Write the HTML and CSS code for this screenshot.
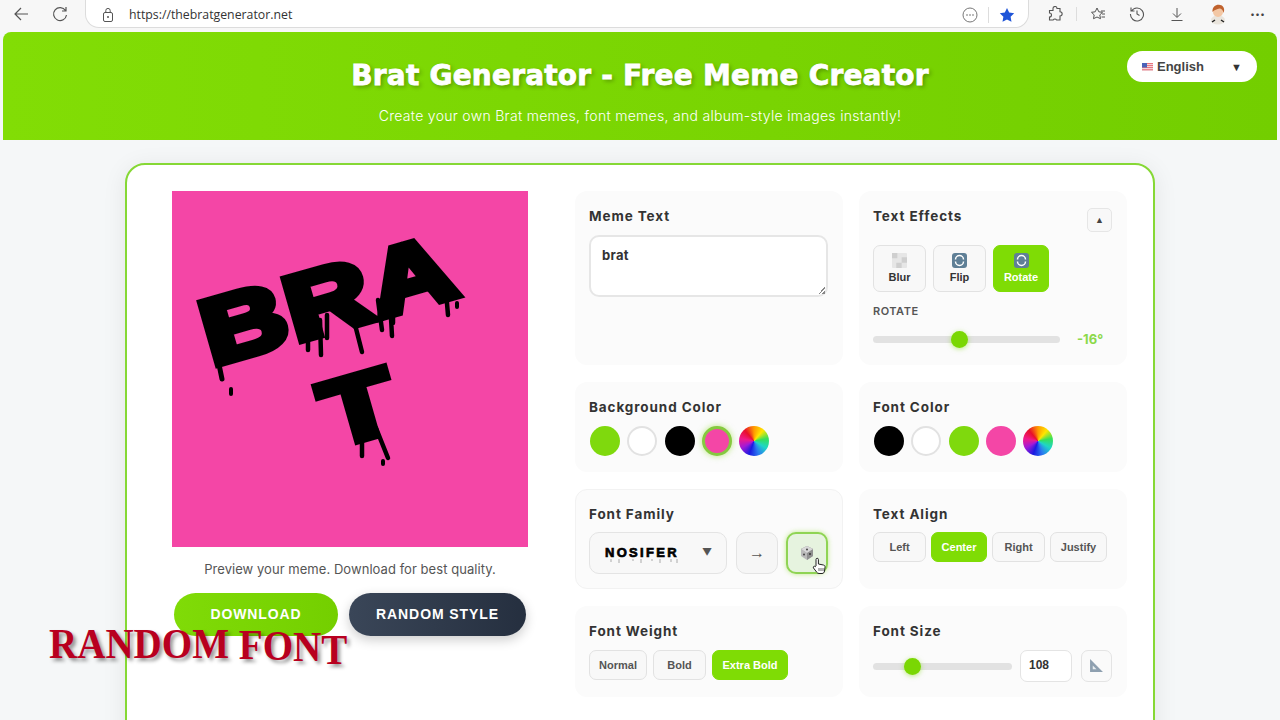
FILE: index.html
```html
<!DOCTYPE html>
<html>
<head>
  <title>Brat Generator</title>
  <link rel="stylesheet" href="styles.css">
</head>
<body>
  <div class="browser-bar">
    <svg class="tool back" width="18" height="18" viewBox="0 0 18 18"><path d="M16 9H3M9 3L3 9l6 6" fill="none" stroke="#555" stroke-width="1.2"/></svg>
    <svg class="tool reload" width="18" height="18" viewBox="0 0 18 18"><path d="M14.5 5.5A6.5 6.5 0 1 0 15.5 10M15 2v4h-4" fill="none" stroke="#555" stroke-width="1.2"/></svg>
    <div class="url-bar">
      <svg width="14" height="16" viewBox="0 0 14 16"><rect x="2.5" y="5.5" width="9" height="9" rx="1.5" fill="none" stroke="#555"/><path d="M4.8 5.5V3.6a2.2 2.2 0 0 1 4.4 0v1.9" fill="none" stroke="#555"/><circle cx="7" cy="10" r="1" fill="#555"/></svg>
      <span class="url-text">https://thebratgenerator.net</span>
      <svg class="url-more" width="16" height="16" viewBox="0 0 16 16"><circle cx="8" cy="8" r="7" fill="none" stroke="#777"/><circle cx="5" cy="8" r=".8" fill="#666"/><circle cx="8" cy="8" r=".8" fill="#666"/><circle cx="11" cy="8" r=".8" fill="#666"/></svg>
      <span class="url-sep"></span>
      <svg width="16" height="16" viewBox="0 0 16 16"><path d="M8 1l2.2 4.6 5 .7-3.6 3.5.9 5L8 12.4l-4.5 2.4.9-5L.8 6.3l5-.7z" fill="#1f55d8"/></svg>
    </div>
    <svg class="tool puzzle" width="16" height="16" viewBox="0 0 16 16"><path d="M6 2.5a2 2 0 0 1 4 0h3v3.2a2 2 0 0 1 0 4.3V14H9.6a2 2 0 0 0-3.4 0H2.5v-3a2 2 0 0 0 0-4V4.5H6z" fill="none" stroke="#555" stroke-width="1.1"/></svg>
    <span class="bar-sep"></span>
    <svg class="tool favs" width="16" height="16" viewBox="0 0 16 16"><path d="M7 2l1.8 3.8 3.7.5-2.7 2.6.7 3.800L7 11l-3.500 1.700.7-3.800L1.500 6.300l3.700-.5zM11 5h4M12 8h3M11.500 11H15" fill="none" stroke="#555"/></svg>
    <svg class="tool history" width="16" height="16" viewBox="0 0 16 16"><path d="M2.500 5A6.500 6.500 0 1 1 1.500 8M2 1.500V5h3.500M8 4.500V8l2.500 1.500" fill="none" stroke="#555" stroke-width="1.100"/></svg>
    <svg class="tool download" width="16" height="16" viewBox="0 0 16 16"><path d="M8 2v9M4 7.500l4 4 4-4M2.500 14.500h11" fill="none" stroke="#555"/></svg>
    <svg class="tool avatar" width="20" height="22" viewBox="0 0 20 22"><ellipse cx="10" cy="17" rx="7" ry="4.500" fill="#e9e4dc"/><circle cx="10" cy="9" r="5" fill="#f3c7a4"/><path d="M4.500 9C4 3 9 1 12 2c4 .5 5 5 3.500 8-.5-3-2-4.500-4-4.500-2.500 1-5 1-7 3.500z" fill="#c0622d"/><path d="M4 19l3-2M16 19l-3-2" stroke="#222" stroke-width="1.500"/></svg>
    <span class="tool more">···</span>
  </div>

  <header class="site-header">
    <h1>Brat Generator - Free Meme Creator</h1>
    <p>Create your own Brat memes, font memes, and album-style images instantly!</p>
    <div class="lang-select">
      <svg width="11" height="8" viewBox="0 0 11 8"><rect width="11" height="8" fill="#e9747f"/><path d="M0 1.500h11M0 3.500h11M0 5.500h11M0 7.300h11" stroke="#f3eef0" stroke-width=".8"/><rect width="5" height="4.500" fill="#4a62b8"/></svg>
      <span>English</span>
      <span class="lang-arrow">▼</span>
    </div>
  </header>

  <main class="generator-card">
    <section class="preview-col">
      <div class="meme-canvas">
        <div class="meme-text">BRA<br>T</div>
        <svg class="drips" width="356" height="356" viewBox="172 191 356 356">
          <g fill="none" stroke="#000" stroke-linecap="round">
            <path d="M216 350l6 29" stroke-width="5"/>
            <path d="M308 320v30M320 320l1 35M327 315v23M350 305l12 47M378 300l4 30M390 300l2 36M393 295v28M445 280l3 35" stroke-width="4.500"/>
            <path d="M362 430v26M376 428l12 30" stroke-width="4.500"/>
            <path d="M231 389v5M457 303v4M383 461v3" stroke-width="4"/>
          </g>
        </svg>
      </div>
      <p class="preview-note">Preview your meme. Download for best quality.</p>
      <div class="action-row">
        <button class="action-btn download-btn">DOWNLOAD</button>
        <button class="action-btn random-btn">RANDOM STYLE</button>
      </div>
    </section>

    <section class="controls">
      <div class="panel">
        <h3>Meme Text</h3>
        <div class="text-box">brat<span class="grip"></span></div>
      </div>

      <div class="panel">
        <h3>Text Effects</h3>
        <button class="collapse-btn">▲</button>
        <div class="effects">
          <button class="effect-btn blur-btn">
            <svg width="15" height="15" viewBox="0 0 14 14"><rect width="14" height="14" rx="1" fill="#e6e6e6"/><path d="M0 0h5v5H0zM9 4h5v5H9zM4 9h5v5H4z" fill="#cfcfcf"/></svg>
            Blur
          </button>
          <button class="effect-btn flip-btn">
            <svg width="15" height="15" viewBox="0 0 15 15"><rect width="15" height="15" rx="3" fill="#5f7f96"/><path d="M3.500 6.500a4 4 0 0 1 8 0M11.500 8.500a4 4 0 0 1-8 0" fill="none" stroke="#fff" stroke-width="1.500"/></svg>
            Flip
          </button>
          <button class="effect-btn rotate-btn active">
            <svg width="15" height="15" viewBox="0 0 15 15"><rect width="15" height="15" rx="3" fill="#5f7f96"/><path d="M3.500 6.500a4 4 0 0 1 8 0M11.500 8.500a4 4 0 0 1-8 0" fill="none" stroke="#fff" stroke-width="1.500"/></svg>
            Rotate
          </button>
        </div>
        <div class="sub-label">ROTATE</div>
        <div class="slider-row">
          <div class="slider rotate-slider"><span class="thumb" style="left: 41.5%"></span></div>
          <span class="slider-value">-16°</span>
        </div>
      </div>

      <div class="panel">
        <h3>Background Color</h3>
        <div class="swatches">
          <span class="swatch green"></span>
          <span class="swatch white"></span>
          <span class="swatch black"></span>
          <span class="swatch pink selected"></span>
          <span class="swatch rainbow"></span>
        </div>
      </div>

      <div class="panel">
        <h3>Font Color</h3>
        <div class="swatches">
          <span class="swatch black"></span>
          <span class="swatch white"></span>
          <span class="swatch green"></span>
          <span class="swatch pink"></span>
          <span class="swatch rainbow"></span>
        </div>
      </div>

      <div class="panel panel-outlined">
        <h3>Font Family</h3>
        <div class="family-row">
          <div class="family-select">
            <span class="family-name">NOSIFER<svg class="name-drips" width="76" height="5" viewBox="0 0 76 5"><path d="M6 0v3M14 0v4M28 0v2M36 0v4M47 0v2M55 0v4M66 0v3M72 0v4" stroke="#aaa" stroke-width="1"/></svg></span>
            <span class="family-arrow">▼</span>
          </div>
          <button class="square-btn arrow-btn">→</button>
          <button class="square-btn dice-btn">
            <svg width="16" height="16" viewBox="0 0 16 16"><path d="M8 1l6 3v7l-6 4-6-4V4z" fill="#b9b9b9"/><path d="M8 8L2 4l6-3 6 3zM8 8v7l6-4V4z" fill="#8f8f8f"/><path d="M8 1l6 3-6 4-6-4z" fill="#d8d8d8"/><circle cx="8" cy="4.500" r="1" fill="#444"/><circle cx="5" cy="9.500" r="1" fill="#444"/><circle cx="11" cy="9" r="1" fill="#333"/></svg>
          </button>
        </div>
      </div>

      <div class="panel">
        <h3>Text Align</h3>
        <div class="pill-row align-row">
          <button class="pill pill-left">Left</button>
          <button class="pill pill-center active">Center</button>
          <button class="pill pill-right">Right</button>
          <button class="pill pill-justify">Justify</button>
        </div>
      </div>

      <div class="panel">
        <h3>Font Weight</h3>
        <div class="pill-row weight-row">
          <button class="pill pill-normal">Normal</button>
          <button class="pill pill-bold">Bold</button>
          <button class="pill pill-extra active">Extra Bold</button>
        </div>
      </div>

      <div class="panel">
        <h3>Font Size</h3>
        <div class="size-row">
          <div class="slider size-slider"><span class="thumb" style="left: 22%"></span></div>
          <div class="size-input">108</div>
          <button class="ruler-btn">
            <svg width="15" height="15" viewBox="0 0 14 14"><path d="M1 1l12 12H1z" fill="#8ea0b0"/><path d="M3.500 7l3.500 3.500H3.500z" fill="#e8edf0"/></svg>
          </button>
        </div>
      </div>
    </section>
  </main>

  <!-- video caption over the page -->
  <div class="video-caption"><span>RANDOM</span> <span class="cap-f">F</span><span class="cap-o">O</span><span class="cap-n">N</span><span class="cap-t">T</span></div>

  <svg class="hand-cursor" width="14" height="18" viewBox="0 0 14 18"><path d="M4 9V2.500a1.200 1.200 0 0 1 2.400 0V7l5 1c1.200.3 1.800 1 1.600 2.200L12.500 14c-.2 1.500-1 2.500-2.500 2.500H7c-1 0-1.800-.5-2.300-1.300L1.500 11c-.8-1.200.8-2.500 1.800-1.300z" fill="#fff" stroke="#222" stroke-width="1"/><path d="M7 11v3M9 11v3M11 11v3" stroke="#222" stroke-width=".7"/></svg>
</body>
</html>
```

FILE: styles.css
```css
* {
  box-sizing: border-box;
}

html,
body {
  margin: 0;
  height: 720px;
  overflow: hidden;
}

body {
  position: relative;
  font-family: Inter, "Liberation Sans", sans-serif;
  background-color: #f5f7f8;
  color: #333;
}

button {
  font-family: "Liberation Sans", Arial, sans-serif;
  cursor: pointer;
}

/* browser chrome */
.browser-bar {
  display: flex;
  align-items: center;
  height: 32px;
  padding: 0 0 4px 12px;
  background-color: #f7f7f7;
}

.tool {
  flex: none;
}

.reload {
  margin-left: 21px;
}

.url-bar {
  display: flex;
  align-items: center;
  width: 944px;
  height: 28px;
  margin: 0 18px 0 16px;
  padding: 2px 13px 0 15px;
  background-color: #fff;
  border: 1px solid #dcdcdc;
  border-top: none;
  border-radius: 0 0 14px 14px;
}

.url-text {
  flex: 1;
  margin-left: 14px;
  font-family: "Open Sans", sans-serif;
  font-size: 12.3px;
  color: #333;
}

.url-sep {
  width: 1px;
  height: 16px;
  margin: 0 10px;
  background-color: #ddd;
}

.bar-sep {
  width: 1px;
  height: 14px;
  margin: 0 13px;
  background-color: #ddd;
}

.history {
  margin-left: 23px;
}

.download {
  margin-left: 24px;
}

.avatar {
  margin-left: 23px;
}

.more {
  margin-left: 22px;
  font-size: 15px;
  font-weight: bold;
  color: #444;
}

/* header */
.site-header {
  position: relative;
  height: 108px;
  margin: 0 3px;
  padding-top: 25px;
  text-align: center;
  color: #fff;
  background: linear-gradient(90deg, #82dd05, #73ce00);
  border-radius: 8px 8px 0 0;
}

.site-header h1 {
  margin: 0;
  font-family: "DejaVu Sans", sans-serif;
  font-size: 28px;
  font-weight: bold;
  line-height: 38px;
  letter-spacing: 0.2px;
  -webkit-text-stroke: 0.8px #fff;
  text-shadow: 2px 2px 4px rgba(0, 0, 0, 0.3);
}

.site-header p {
  margin: 11px 0 0;
  font-size: 14px;
  font-weight: 300;
  line-height: 20px;
  letter-spacing: 0.3px;
}

.lang-select {
  position: absolute;
  top: 19px;
  right: 20px;
  display: flex;
  align-items: center;
  gap: 4px;
  width: 130px;
  height: 31px;
  padding: 0 15px;
  font-family: "Liberation Sans", Arial, sans-serif;
  font-size: 13px;
  font-weight: bold;
  color: #444;
  background-color: #fff;
  border-radius: 16px;
}

.lang-arrow {
  margin-left: auto;
  font-size: 11px;
  color: #333;
}

/* main card */
.generator-card {
  display: grid;
  grid-template-columns: 356px 552px;
  column-gap: 47px;
  width: 1030px;
  height: 600px;
  margin: 23px auto 0;
  padding: 26px 45px;
  background-color: #fff;
  border: 2px solid #86d835;
  border-radius: 20px;
  box-shadow: 0 4px 24px rgba(0, 0, 0, 0.08);
}

.meme-canvas {
  position: relative;
  width: 356px;
  height: 356px;
  overflow: hidden;
  background-color: #f446a6;
}

.meme-text {
  position: absolute;
  top: 50px;
  left: -6px;
  width: 356px;
  font-family: "Liberation Sans", Arial, sans-serif;
  font-size: 92px;
  font-weight: bold;
  line-height: 112px;
  letter-spacing: 2px;
  text-align: center;
  color: #000;
  -webkit-text-stroke: 8px #000;
  transform: rotate(-16deg) scaleX(1.27);
}

.drips {
  position: absolute;
  top: 0;
  left: 0;
}

.preview-note {
  margin: 13px 0 0;
  font-size: 13px;
  line-height: 18px;
  letter-spacing: 0.05px;
  text-align: center;
  color: #555;
}

.action-row {
  display: flex;
  gap: 11px;
  margin: 15px 0 0 2px;
}

.action-btn {
  height: 43px;
  padding: 0 0 2px;
  border: none;
  border-radius: 22px;
  font-size: 14px;
  font-weight: bold;
  letter-spacing: 0.9px;
  color: #fff;
}

.download-btn {
  width: 164px;
  background: linear-gradient(90deg, #80db07, #74cf00);
}

.random-btn {
  width: 177px;
  background: linear-gradient(90deg, #3a4658, #252f3f);
  box-shadow: 0 4px 12px rgba(0, 0, 0, 0.2);
}

/* control panels */
.controls {
  display: grid;
  grid-template-columns: 268px 268px;
  grid-template-rows: 174px 90px 100px 91px;
  gap: 17px 16px;
}

.panel {
  position: relative;
  padding: 16px 14px;
  background-color: #fbfbfb;
  border-radius: 12px;
}

.panel-outlined {
  border: 1px solid #f2f2f2;
  padding: 15px 13px;
}

.panel h3 {
  margin: 0;
  font-size: 13.5px;
  font-weight: 700;
  line-height: 18px;
  letter-spacing: 0.9px;
  color: #333;
}

.text-box {
  position: relative;
  width: 239px;
  height: 62px;
  margin-top: 10px;
  padding: 10px 11px;
  font-size: 13px;
  font-weight: 700;
  letter-spacing: 0.3px;
  background-color: #fff;
  border: 2px solid #e6e6e6;
  border-radius: 10px;
}

.grip {
  position: absolute;
  right: 1px;
  bottom: 1px;
  width: 7px;
  height: 7px;
  background: linear-gradient(135deg, transparent 50%, #888 50%, #888 60%, transparent 60%, transparent 75%, #888 75%);
}

.collapse-btn {
  position: absolute;
  top: 17px;
  right: 15px;
  width: 25px;
  height: 24px;
  padding: 0;
  font-size: 9px;
  color: #444;
  background-color: #f8f8f8;
  border: 1px solid #e6e6e6;
  border-radius: 5px;
}

.effects {
  display: flex;
  gap: 7px;
  margin-top: 20px;
}

.effect-btn {
  display: flex;
  flex-direction: column;
  align-items: center;
  gap: 3px;
  width: 53px;
  height: 47px;
  padding: 7px 0 0;
  font-size: 11px;
  font-weight: bold;
  color: #333;
  background-color: #f8f8f8;
  border: 1.5px solid #e2e2e2;
  border-radius: 7px;
}

.effect-btn.active {
  width: 56px;
  color: #fff;
  background-color: #7fdc05;
  border-color: #7fdc05;
}

.sub-label {
  margin-top: 12px;
  font-size: 11px;
  font-weight: 600;
  line-height: 14px;
  letter-spacing: 0.5px;
  color: #555;
}

.slider-row {
  display: flex;
  align-items: center;
  margin-top: 13px;
}

.slider {
  position: relative;
  height: 7px;
  background-color: #e2e2e2;
  border-radius: 4px;
}

.rotate-slider {
  width: 187px;
}

.thumb {
  position: absolute;
  top: -5px;
  width: 17px;
  height: 17px;
  background-color: #7ad703;
  border-radius: 50%;
  box-shadow: 0 1px 5px rgba(122, 215, 3, 0.5);
}

.slider-value {
  margin-left: 17px;
  font-size: 13px;
  font-weight: 700;
  color: #8cd94a;
}

.swatches {
  display: flex;
  gap: 7.250px;
  margin: 10px 0 0 1px;
}

.swatch {
  width: 30px;
  height: 30px;
  border-radius: 50%;
}

.swatch.green {
  background-color: #7fd90d;
}

.swatch.white {
  background-color: #fff;
  border: 2px solid #e2e2e2;
}

.swatch.black {
  background-color: #000;
}

.swatch.pink {
  background-color: #f446a6;
}

.swatch.selected {
  border: 3px solid #85c93f;
  box-shadow: 0 0 6px rgba(122, 215, 3, 0.5);
}

.swatch.rainbow {
  background: conic-gradient(#ff9a00, #ffe600, #35e05a, #1fd6c8, #2a7bf0, #1a1ae0, #a01ad8, #f01a8a, #e8102a, #ff9a00);
}

.family-row {
  display: flex;
  align-items: center;
  gap: 9px;
  margin-top: 9px;
}

.family-select {
  display: flex;
  align-items: center;
  justify-content: space-between;
  width: 138px;
  height: 42px;
  padding: 0 14px 2px;
  background-color: #f8f8f8;
  border: 1.5px solid #e4e4e4;
  border-radius: 10px;
}

.family-name {
  position: relative;
  margin-left: 1px;
  font-family: "Liberation Sans", Arial, sans-serif;
  font-size: 13px;
  font-weight: bold;
  letter-spacing: 2.3px;
  color: #000;
  -webkit-text-stroke: 0.7px #000;
}

.name-drips {
  position: absolute;
  top: 14px;
  left: 0;
}

.family-arrow {
  font-size: 10px;
  color: #555;
}

.square-btn {
  width: 42px;
  height: 42px;
  padding: 0;
  background-color: #f6f6f6;
  border: 1.5px solid #e4e4e4;
  border-radius: 10px;
}

.arrow-btn {
  font-size: 16px;
  color: #555;
}

.dice-btn {
  margin-left: -1px;
  background-color: #e6f3df;
  border: 2px solid #8fd454;
  box-shadow: 0 0 5px rgba(122, 215, 3, 0.45);
}

.dice-btn svg {
  display: block;
  margin: auto;
}

.pill-row {
  display: flex;
  gap: 5px;
  margin-top: 9px;
}

.weight-row {
  gap: 6px;
  margin-top: 10px;
}

.pill {
  height: 30px;
  padding: 0;
  font-size: 11px;
  font-weight: bold;
  color: #555;
  background-color: #f8f8f8;
  border: 1.5px solid #e2e2e2;
  border-radius: 7px;
}

.pill.active {
  color: #fff;
  background-color: #7fdc05;
  border-color: #7fdc05;
}

.pill-left {
  width: 53px;
}

.pill-center {
  width: 56px;
}

.pill-right {
  width: 53px;
}

.pill-justify {
  width: 57px;
}

.pill-normal {
  width: 58px;
}

.pill-bold {
  width: 53px;
}

.pill-extra {
  width: 76px;
}

.size-row {
  display: flex;
  align-items: center;
  margin-top: 10px;
}

.size-slider {
  width: 139px;
}

.size-input {
  width: 52px;
  height: 32px;
  margin-left: 8px;
  padding-left: 8px;
  font-family: "Liberation Sans", Arial, sans-serif;
  font-size: 12px;
  font-weight: bold;
  line-height: 29px;
  background-color: #fff;
  border: 1.5px solid #e4e4e4;
  border-radius: 7px;
}

.ruler-btn {
  width: 31px;
  height: 32px;
  margin-left: 9px;
  padding: 2px 0 0;
  background-color: #fafafa;
  border: 1.5px solid #e4e4e4;
  border-radius: 7px;
}

/* overlays */
.video-caption {
  position: absolute;
  top: 620px;
  left: 49px;
  font-family: "Liberation Serif", serif;
  font-size: 42px;
  font-weight: bold;
  line-height: 48px;
  white-space: nowrap;
  color: #b8001f;
  text-shadow: 3px 3px 4px rgba(0, 0, 0, 0.4);
  transform: scaleX(0.93);
  transform-origin: left center;
}

.video-caption span {
  display: inline-block;
}

.cap-f {
  transform: translateY(1px);
}

.cap-o {
  transform: translateY(2px);
}

.cap-n {
  transform: translateY(3px);
}

.cap-t {
  transform: translateY(6px);
}

.hand-cursor {
  position: absolute;
  top: 557px;
  left: 812px;
}
```
